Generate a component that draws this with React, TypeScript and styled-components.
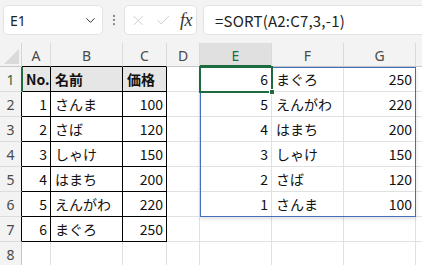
import React from "react";
import styled, { createGlobalStyle } from "styled-components";
import { ChevronDown, X, Check, EllipsisVertical } from "lucide-react";

const GlobalStyle = createGlobalStyle`
  html, body { margin: 0; padding: 0; background: #fff; overflow: hidden; }
  * { box-sizing: border-box; }
`;

const Page = styled.div`
  width: 422px;
  height: 265px;
  overflow: hidden;
  display: flex;
  flex-direction: column;
  font-family: "Noto Sans CJK JP", "Noto Sans", sans-serif;
`;

const TopBar = styled.div`
  height: 43px;
  flex: none;
  background: #f3f3f3;
  display: flex;
  align-items: flex-start;
  padding: 5px 0 0 3px;
`;

const NameBox = styled.div`
  width: 100px;
  height: 30px;
  background: #fff;
  border: 1px solid #e2e2e2;
  border-radius: 5px;
  display: flex;
  align-items: center;
  justify-content: space-between;
  padding: 0 4px 0 6px;
  font-family: "Noto Sans", sans-serif;
  font-size: 14px;
  color: #222;
`;

const Grip = styled.div`
  width: 21px;
  height: 30px;
  display: flex;
  align-items: center;
  justify-content: center;
  color: #8a8a8a;
`;

const FxBox = styled.div`
  width: 73px;
  height: 30px;
  margin-right: 6px;
  background: #fff;
  border: 1px solid #e2e2e2;
  border-radius: 5px;
  display: flex;
  align-items: center;
  padding: 0 4px 0 5px;
  gap: 8px;
  color: #c4c4c4;
`;

const FxLabel = styled.span`
  font-family: "Liberation Serif", serif;
  font-style: italic;
  font-size: 18px;
  color: #333;
  margin-left: 1px;
  letter-spacing: -0.5px;
`;

const FormulaInput = styled.div`
  flex: 1;
  height: 30px;
  margin-right: -10px;
  background: #fff;
  border: 1px solid #e2e2e2;
  border-radius: 5px;
  display: flex;
  align-items: center;
  padding-left: 11px;
  font-size: 15px;
  letter-spacing: 0.2px;
  color: #222;
`;

const Sheet = styled.div`
  display: grid;
  grid-template-columns: 22px 29px 72px 44px 33px 72px 72px 72px 72px;
  grid-template-rows: 24px repeat(8, 25px);
  width: 500px;
`;

type Pos = { $r: number; $c: number };

const Corner = styled.div`
  grid-row: 1;
  grid-column: 1;
  background: #f3f3f3;
  border-right: 1px solid #d6d6d6;
  border-bottom: 1px solid #c8c8c8;
  display: flex;
  align-items: flex-end;
  justify-content: flex-end;
  padding: 0 2px 2px 0;
`;

const ColHead = styled.div<{ $c: number; $sel?: boolean; $edge?: string }>`
  grid-row: 1;
  grid-column: ${(p) => p.$c};
  background: ${(p) => (p.$sel ? "#e0e0e0" : "#f3f3f3")};
  color: ${(p) => (p.$sel ? "#1d6b3f" : "#4a4a4a")};
  border-right: 1px solid #dadada;
  border-bottom: 1px solid ${(p) => p.$edge || "#c8c8c8"};
  box-shadow: ${(p) => (p.$sel ? "inset 0 -1px 0 #1d6b3f" : "none")};
  display: flex;
  align-items: center;
  justify-content: center;
  font-family: "Noto Sans", sans-serif;
  font-size: 14px;
  padding-top: 1px;
`;

const RowHead = styled.div<{ $r: number; $sel?: boolean; $edge?: string }>`
  grid-row: ${(p) => p.$r};
  grid-column: 1;
  background: #f3f3f3;
  color: ${(p) => (p.$sel ? "#1d6b3f" : "#4a4a4a")};
  border-right: 1px solid ${(p) => p.$edge || "#c8c8c8"};
  border-bottom: 1px solid #dcdcdc;
  box-shadow: ${(p) => (p.$sel ? "1px 0 0 #1d6b3f" : "none")};
  position: relative;
  z-index: ${(p) => (p.$sel ? 2 : 0)};
  display: flex;
  align-items: center;
  justify-content: center;
  font-family: "Noto Sans", sans-serif;
  font-size: 14px;
`;

const Cell = styled.div<
  Pos & {
    $align?: "left" | "right";
    $boxed?: boolean;
    $head?: boolean;
  }
>`
  grid-row: ${(p) => p.$r};
  grid-column: ${(p) => p.$c};
  background: ${(p) => (p.$head ? "#e7e6e6" : "#fff")};
  border-right: 1px solid ${(p) => (p.$boxed ? "#000" : "#e1e1e1")};
  border-bottom: 1px solid ${(p) => (p.$boxed ? "#000" : "#e1e1e1")};
  display: flex;
  align-items: center;
  justify-content: ${(p) => (p.$align === "right" ? "flex-end" : "flex-start")};
  padding: 0 3px 0 4px;
  font-size: 14px;
  font-weight: ${(p) => (p.$head ? 700 : 400)};
  color: #111;
  white-space: nowrap;
  overflow: hidden;
`;

const SpillFrame = styled.div`
  grid-column: 6 / 9;
  grid-row: 2 / 8;
  border: 1px solid #4270bd;
  box-shadow: 0 2px 4px rgba(0, 0, 0, 0.12);
  pointer-events: none;
  z-index: 3;
`;

const ActiveCell = styled.div`
  grid-column: 6;
  grid-row: 2;
  margin: -1px -1px -1px -1px;
  border: 2px solid #1d6b3f;
  position: relative;
  pointer-events: none;
  z-index: 4;
`;

const FillHandle = styled.div`
  position: absolute;
  right: -4px;
  bottom: -4px;
  width: 6px;
  height: 6px;
  background: #1d6b3f;
  border: 1px solid #fff;
`;

const tableRows: [string, string, string][] = [
  ["No.", "名前", "価格"],
  ["1", "さんま", "100"],
  ["2", "さば", "120"],
  ["3", "しゃけ", "150"],
  ["4", "はまち", "200"],
  ["5", "えんがわ", "220"],
  ["6", "まぐろ", "250"],
];

const sorted: [string, string, string][] = [
  ["6", "まぐろ", "250"],
  ["5", "えんがわ", "220"],
  ["4", "はまち", "200"],
  ["3", "しゃけ", "150"],
  ["2", "さば", "120"],
  ["1", "さんま", "100"],
];

const cols = ["A", "B", "C", "D", "E", "F", "G", ""];

export default function App() {
  const rows = [];
  for (let i = 0; i < 8; i++) {
    const r = i + 2;
    const t = tableRows[i];
    const s = sorted[i];
    const head = i === 0;
    rows.push(
      <React.Fragment key={i}>
        <RowHead $r={r} $sel={i === 0} $edge={i === 0 ? "#1d6b3f" : t ? "#000" : undefined}>
          {i + 1}
        </RowHead>
        <Cell $r={r} $c={2} $boxed={!!t} $head={head} $align={head ? "left" : "right"}>
          {t ? t[0] : ""}
        </Cell>
        <Cell $r={r} $c={3} $boxed={!!t} $head={head}>
          {t ? t[1] : ""}
        </Cell>
        <Cell $r={r} $c={4} $boxed={!!t} $head={head} $align={head ? "left" : "right"}>
          {t ? t[2] : ""}
        </Cell>
        <Cell $r={r} $c={5} />
        <Cell $r={r} $c={6} $align="right">
          {s ? s[0] : ""}
        </Cell>
        <Cell $r={r} $c={7}>{s ? s[1] : ""}</Cell>
        <Cell $r={r} $c={8} $align="right">
          {s ? s[2] : ""}
        </Cell>
        <Cell $r={r} $c={9} />
      </React.Fragment>
    );
  }

  return (
    <Page>
      <GlobalStyle />
      <TopBar>
        <NameBox>
          <span>E1</span>
          <ChevronDown size={15} strokeWidth={1.6} color="#333" />
        </NameBox>
        <Grip>
          <EllipsisVertical size={14} strokeWidth={2} />
        </Grip>
        <FxBox>
          <X size={17} strokeWidth={1.2} />
          <Check size={17} strokeWidth={1.2} />
          <FxLabel>fx</FxLabel>
        </FxBox>
        <FormulaInput>=SORT(A2:C7,3,-1)</FormulaInput>
      </TopBar>
      <Sheet>
        <Corner>
          <svg width="15" height="15" viewBox="0 0 15 15">
            <polygon points="15,0 15,15 0,15" fill="#dadada" />
          </svg>
        </Corner>
        {cols.map((c, i) => (
          <ColHead
            key={i}
            $c={i + 2}
            $sel={c === "E"}
            $edge={i < 3 ? "#000" : c === "E" ? "#1d6b3f" : undefined}
          >
            {c}
          </ColHead>
        ))}
        {rows}
        <SpillFrame />
        <ActiveCell>
          <FillHandle />
        </ActiveCell>
      </Sheet>
    </Page>
  );
}
